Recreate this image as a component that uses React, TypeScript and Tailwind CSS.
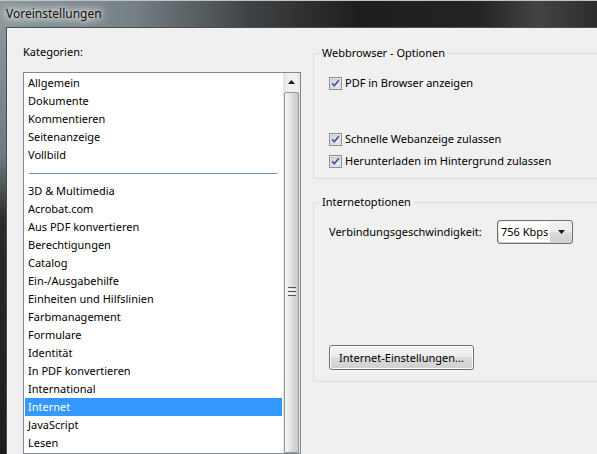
import React from 'react';

const font = { fontFamily: '"Noto Sans", "Liberation Sans", sans-serif' };

const categoriesTop = ['Allgemein', 'Dokumente', 'Kommentieren', 'Seitenanzeige', 'Vollbild'];
const categoriesRest = [
  '3D & Multimedia',
  'Acrobat.com',
  'Aus PDF konvertieren',
  'Berechtigungen',
  'Catalog',
  'Ein-/Ausgabehilfe',
  'Einheiten und Hilfslinien',
  'Farbmanagement',
  'Formulare',
  'Identität',
  'In PDF konvertieren',
  'International',
  'Internet',
  'JavaScript',
  'Lesen',
];

function CheckBox() {
  return (
    <svg width="13" height="13" viewBox="0 0 13 13" className="shrink-0">
      <defs>
        <linearGradient id="cbFill" x1="0" y1="0" x2="1" y2="1">
          <stop offset="0" stopColor="#cbcfd5" />
          <stop offset="1" stopColor="#f6f6f6" />
        </linearGradient>
      </defs>
      <rect x="0.5" y="0.5" width="12" height="12" fill="#f4f4f4" stroke="#8e8f8f" />
      <rect x="2" y="2" width="9" height="9" fill="url(#cbFill)" stroke="#b8bcc2" strokeWidth="0.6" />
      <path d="M3.2 6.4 L5.3 8.8 L9.8 3.2" fill="none" stroke="#3c5a9a" strokeWidth="1.7" />
    </svg>
  );
}

function Check({ label }: { label: string }) {
  return (
    <div className="flex items-center gap-[3px] h-[18px]">
      <CheckBox />
      <span>{label}</span>
    </div>
  );
}

function GroupBox({ title, className, children }: { title: string; className: string; children: React.ReactNode }) {
  return (
    <div className={`relative border border-r-0 border-[#d5dfe5] rounded-l-[3px] ${className}`}>
      <span className="absolute -top-[9px] left-[6px] px-[2px] bg-[#f0f0f0] leading-[16px] text-[#000]">{title}</span>
      {children}
    </div>
  );
}

export default function App() {
  return (
    <div className="w-[597px] h-[454px] overflow-hidden text-[11px] text-black flex flex-col bg-[#1f1f1f]" style={font}>
      {/* window caption */}
      <div className="h-[27px] shrink-0 flex items-center pl-[6px] border-t border-[#bfc4c7] bg-[linear-gradient(90deg,#8d989d_0%,#768186_22%,#3f4244_42%,#1e1e1e_60%,#232323_80%,#444_90%,#2c2c2c_100%)]">
        <span className="text-[12px] text-[#111] [text-shadow:0_0_6px_#fff,0_0_10px_#fff,0_0_14px_#ffffffcc]">Voreinstellungen</span>
      </div>

      <div className="flex-1 flex min-h-0">
        {/* left frame */}
        <div className="w-[6px] shrink-0 bg-[linear-gradient(180deg,#8a959a_0%,#707a7e_30%,#2a2a2a_45%,#1c1c1c_100%)]" />

        {/* dialog body */}
        <div className="flex-1 flex bg-[#f0f0f0] border-t border-l border-[#4b4f52] min-w-0">
          {/* categories column */}
          <div className="w-[294px] shrink-0 pl-[16px] pt-[16px] flex flex-col">
            <div className="leading-[16px] h-[28px]">Kategorien:</div>
            <div className="flex-1 flex border border-[#828790] bg-white w-[278px]">
              <div className="flex-1 pt-px">
                {categoriesTop.map((c) => (
                  <div key={c} className="h-[18px] leading-[18px] pl-[4px]">{c}</div>
                ))}
                <div className="h-[18px] flex items-center px-[5px]">
                  <div className="h-px w-[248px] bg-[#4e9be4]" />
                </div>
                {categoriesRest.map((c) => (
                  <div
                    key={c}
                    className={`h-[18px] leading-[18px] pl-[3px] mx-px ${c === 'Internet' ? 'bg-[#3399ff] text-white' : ''}`}
                  >
                    {c}
                  </div>
                ))}
              </div>
              {/* vertical scrollbar */}
              <div className="w-[17px] shrink-0 flex flex-col bg-[linear-gradient(90deg,#e3e3e3,#f2f2f2_40%,#f0f0f0_80%,#e6e6e6)]">
                <div className="h-[17px] flex items-center justify-center">
                  <svg width="7" height="4" viewBox="0 0 7 4">
                    <path d="M3.5 0 L7 4 L0 4 Z" fill="#1a1a1a" />
                  </svg>
                </div>
                <div className="mt-[2px] mx-px flex-1 rounded-t-[2px] border border-[#979797] bg-[linear-gradient(90deg,#f6f6f6_0%,#eaeaea_30%,#d8d8d8_60%,#cacaca_100%)] flex flex-col items-center pt-[194px]">
                  <div className="flex flex-col gap-px">
                    <div className="w-[8px] h-px bg-[#555]" />
                    <div className="w-[8px] h-px bg-[#fff]" />
                    <div className="w-[8px] h-px bg-[#555]" />
                    <div className="w-[8px] h-px bg-[#fff]" />
                    <div className="w-[8px] h-px bg-[#555]" />
                  </div>
                </div>
              </div>
            </div>
          </div>

          {/* options column */}
          <div className="flex-1 pl-[12px] pt-[25px] flex flex-col">
            <GroupBox title="Webbrowser - Optionen" className="h-[126px] pl-[15px] pt-[20px]">
              <Check label="PDF in Browser anzeigen" />
              <div className="h-[38px]" />
              <Check label="Schnelle Webanzeige zulassen" />
              <div className="h-[4px]" />
              <Check label="Herunterladen im Hintergrund zulassen" />
            </GroupBox>

            <GroupBox title="Internetoptionen" className="mt-[23px] h-[180px] pl-[15px] pt-[17px]">
              <div className="flex items-center">
                <span className="w-[168px] shrink-0 whitespace-nowrap">Verbindungsgeschwindigkeit:</span>
                <div className="w-[76px] h-[24px] shrink-0 flex border border-[#707070] rounded-[3px] bg-[linear-gradient(180deg,#f2f2f2,#ebebeb_50%,#dddddd_50%,#cfcfcf)] overflow-hidden">
                  <div className="m-px w-[51px] bg-white leading-[20px] pl-[2px] whitespace-nowrap">756 Kbps</div>
                  <div className="flex-1 flex items-center justify-center">
                    <svg width="7" height="4" viewBox="0 0 7 4">
                      <path d="M0 0 L7 0 L3.5 4 Z" fill="#1a1a1a" />
                    </svg>
                  </div>
                </div>
              </div>
              <button className="mt-[101px] w-[145px] h-[25px] border border-[#707070] rounded-[3px] bg-[linear-gradient(180deg,#f2f2f2,#ebebeb_50%,#dddddd_50%,#cfcfcf)] text-center leading-[21px] shadow-[inset_0_0_0_1px_#fcfcfc]">
                Internet-Einstellungen...
              </button>
            </GroupBox>
          </div>
        </div>
      </div>
    </div>
  );
}
